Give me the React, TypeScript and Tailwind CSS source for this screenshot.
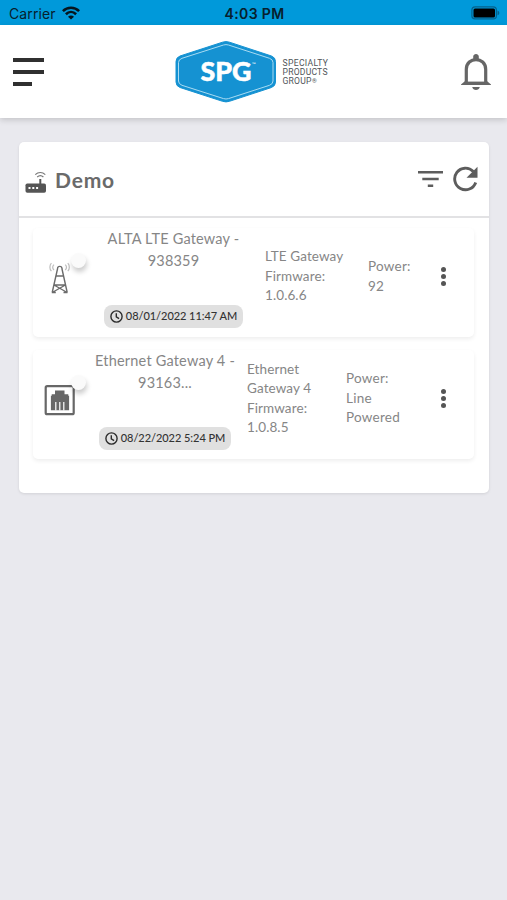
import * as React from 'react'

type Gateway = {
  name: string[]
  date: string
  details: string[]
  power: string[]
  icon: React.ReactNode
  columns: string
}

const TowerIcon = () => (
  <svg className="mt-[2px]" width="22" height="34" viewBox="0 0 22 34" fill="none" stroke="#6b6b6b" strokeWidth="1.4">
    <path d="M8.600 7.500 3.200 31.500M12.900 7.500l5.300 24M8.600 7.500c0-2.900 4.300-2.900 4.300 0M6.800 15h7.800M5 24l13.200 7.500M16.400 24 3.200 31.500M5 24h11.400M2.800 31.500h4M14.500 31.500h4" />
    <g stroke="#bdbdbd" strokeWidth="1.200">
      <path d="M2.400 2.200c-2 2-2 6 0 8M5 3.600c-1.500 1.500-1.500 3.800 0 5.400M18.800 2.200c2 2 2 6 0 8M16.200 3.600c1.500 1.500 1.500 3.800 0 5.400" />
    </g>
  </svg>
)

const EthernetIcon = () => (
  <svg className="mt-[4px]" width="31" height="31" viewBox="0 0 31 31" fill="none">
    <rect x="1.700" y="1.200" width="28" height="28" rx="1.500" stroke="#676767" strokeWidth="2.200" />
    <path d="M11 5.500h9.500v3.700h3.800v1.600h.8v14.500H6.900V10.800h.8V9.200H11z" fill="#676767" />
    <path d="M11.800 17v8.500M15.800 17v8.500M19.800 17v8.500" stroke="#fff" strokeWidth="1.200" />
  </svg>
)

const ClockIcon = () => (
  <svg width="13" height="13" viewBox="0 0 13 13" fill="none" stroke="#2b2b2b" strokeWidth="1.4">
    <circle cx="6.5" cy="6.5" r="5.6" />
    <path d="M6.3 3.2v3.6l2.8 1.8" />
  </svg>
)

const gateways: Gateway[] = [
  {
    name: ['ALTA LTE Gateway -', '938359'],
    date: '08/01/2022 11:47 AM',
    details: ['LTE Gateway', 'Firmware:', '1.0.6.6'],
    power: ['Power:', '92'],
    icon: <TowerIcon />,
    columns: 'grid-cols-[71px_139px_22px_103px_66px_1fr]',
  },
  {
    name: ['Ethernet Gateway 4 -', '93163...'],
    date: '08/22/2022 5:24 PM',
    details: ['Ethernet', 'Gateway 4', 'Firmware:', '1.0.8.5'],
    power: ['Power:', 'Line', 'Powered'],
    icon: <EthernetIcon />,
    columns: 'grid-cols-[62px_140px_12px_99px_88px_1fr]',
  },
]

const StatusBar = () => (
  <div className="grid h-[25px] grid-cols-3 items-center bg-[#0099da] pl-[9px] pr-[7px] text-[#07202d]">
    <div className="flex items-center gap-[6px] pt-[3px] font-['Inter'] text-[14px] leading-[18px]">
      <span className="tracking-[0.1px]">Carrier</span>
      <svg className="-mt-[3px]" width="18" height="14" viewBox="0 0 18 14" fill="none" stroke="#06151d" strokeWidth="2.6">
        <path d="M.9 5.1c4.600-4.500 11.600-4.500 16.200 0M3.900 8.200c3-2.900 7.200-2.900 10.200 0" />
        <path d="M9 13.600 6 10.700c1.800-1.600 4.200-1.600 6 0z" fill="#06151d" stroke="none" />
      </svg>
    </div>
    <span className="pt-[3px] text-center font-['Inter'] text-[14px] leading-[18px] font-semibold tracking-[0.35px] whitespace-nowrap">
      4:03 PM
    </span>
    <svg className="mt-px justify-self-end" width="29" height="14" viewBox="0 0 29 14">
      <rect x=".9" y=".9" width="24.500" height="12" rx="3.200" fill="none" stroke="#04628d" strokeWidth="1.200" />
      <rect x="2.500" y="2.500" width="21.500" height="9" rx="1.500" fill="#000" />
      <path d="M26.500 4.500c2.400.8 2.400 4 0 4.800z" fill="#04628d" />
    </svg>
  </div>
)

const Logo = () => (
  <svg className="-ml-px" width="156" height="64" viewBox="0 0 156 64">
    <path
      d="M47.5 2.200Q51 1 54.5 2.200L96.500 16Q100.500 17.500 100.500 21.500V42Q100.500 46 96.500 47.500L54.500 61.300Q51 62.500 47.500 61.300L5 47.500Q1 46 1 42V21.500Q1 17.500 5 16Z"
      fill="#1592d2"
      stroke="#1592d2"
    />
    <path
      d="M48.500 5Q51 4.200 53.500 5L94.500 18.300Q98 19.500 98 22.500V41Q98 44 94.500 45.300L53.500 58.600Q51 59.400 48.500 58.600L7 45.300Q3.500 44 3.500 41V22.500Q3.500 19.500 7 18.300Z"
      fill="none"
      stroke="#a9dbf2"
      strokeWidth="1"
    />
    <text
      x="25.500"
      y="41"
      textLength="51"
      lengthAdjust="spacingAndGlyphs"
      className="fill-white stroke-white stroke-[0.5px] font-['Lato'] text-[26px] font-black"
    >
      SPG
    </text>
    <text x="77" y="26" className="fill-white font-['Lato'] text-[5px]">
      ™
    </text>
    <g className="fill-[#4f5458] font-['Roboto'] text-[8.6px]">
      <text x="107.500" y="26" textLength="45.500">SPECIALTY</text>
      <text x="107.500" y="35" textLength="45">PRODUCTS</text>
      <text x="107.500" y="44" textLength="29">GROUP</text>
      <text x="137" y="43" className="text-[6px]">®</text>
    </g>
  </svg>
)

const Header = () => (
  <header className="relative grid h-[93px] grid-cols-[1fr_156px_1fr] items-center bg-white px-[13px] shadow-[0_2px_6px_rgba(0,0,0,0.16)]">
    <button type="button" className="flex flex-col gap-2">
      <span className="h-1 w-[31px] bg-[#303030]" />
      <span className="h-1 w-[31px] bg-[#303030]" />
      <span className="h-1 w-[19px] bg-[#303030]" />
    </button>
    <Logo />
    <svg className="justify-self-end" width="36" height="38" viewBox="0 0 36 38">
      <path d="M8.300 29V16.500c0-13.300 19.400-13.300 19.400 0V29" fill="none" stroke="#666" strokeWidth="3.200" />
      <path d="M3 31.500l5-4.300h20l5 4.300v.5H3zM15.200 6V3.600c0-3.600 5.600-3.600 5.600 0V6zM14.200 34h7.600c-.8 4-6.800 4-7.600 0z" fill="#666" />
      <path d="M9.900 27h16.200v1.600H9.900z" fill="#fff" />
    </svg>
  </header>
)

const CardHeader = () => (
  <div className="flex h-[76px] items-center border-b-2 border-[#e2e2e4] pl-[6px] pr-[11.5px]">
    <svg className="mt-[7px]" width="22" height="23" viewBox="0 0 22 23">
      <rect x=".5" y="12.500" width="20.500" height="9.200" rx="1.800" fill="#555" />
      <path d="M14.300 8h2v6h-2z" fill="#555" />
      <path d="M3.500 16h2v2h-2zM7.300 16h2v2h-2zM11.100 16h2v2h-2z" fill="#fff" />
      <path d="M10.300 3.600c2.900-2.800 7.100-2.800 10 0M12.200 6c1.900-1.700 4.300-1.700 6.200 0" fill="none" stroke="#777" strokeWidth="1.200" />
    </svg>
    <h1 className="mt-[2px] ml-[8px] font-['Lato'] text-[21px] leading-7 font-bold tracking-[0.8px] text-[#6a6a6a]">Demo</h1>
    <div className="ml-auto flex items-center gap-[9px]">
      <svg width="25" height="18" viewBox="0 0 25 18" fill="#5d5d5d">
        <path d="M0 1h25v2.600H0zM4.300 7.700h16.400v2.600H4.300zM9.800 14.400h5.400V17H9.800z" />
      </svg>
      <svg width="26" height="26" viewBox="0 0 26 26">
        <path d="M21.300 5.500A10.800 10.800 0 1 0 23.700 16.500" fill="none" stroke="#5d5d5d" strokeWidth="2.900" />
        <path d="M25.500.8v11H14.500z" fill="#5d5d5d" />
      </svg>
    </div>
  </div>
)

const GatewayRow: React.FC<{ gateway: Gateway }> = ({ gateway }) => (
  <div
    className={`grid h-[109px] items-center rounded-[5px] bg-white pb-[12px] font-['Lato'] text-[#868686] shadow-[0_2px_4px_rgba(0,0,0,0.07)] ${gateway.columns}`}
  >
    <div className="relative flex h-[40px] w-[53px] items-center justify-center">
      {gateway.icon}
      {/* Status dot */}
      <span className="absolute -top-[4px] left-[38px] size-[15px] rounded-full bg-[#fafafa] shadow-[1px_4px_5px_rgba(0,0,0,0.2)]" />
    </div>
    <div className="flex h-full flex-col items-center justify-between">
      <div className="text-center text-[14.5px] leading-[21.5px] tracking-[0.2px] whitespace-nowrap">
        {gateway.name.map((line) => (
          <p key={line}>{line}</p>
        ))}
      </div>
      <div className="-mb-[3px] flex h-[23px] items-center gap-[3px] rounded-[8px] bg-[#e0e0e0] px-[6px] text-[11px] font-medium text-[#333] whitespace-nowrap">
        <ClockIcon />
        <span className="-mt-px tracking-[-0.05px]">{gateway.date}</span>
      </div>
    </div>
    <div className="col-start-4 text-[13.5px] leading-[19.500px] tracking-[0.1px] whitespace-nowrap">
      {gateway.details.map((line) => (
        <p key={line}>{line}</p>
      ))}
    </div>
    <div className="text-[13.5px] leading-[19.500px] tracking-[0.25px]">
      {gateway.power.map((line) => (
        <p key={line}>{line}</p>
      ))}
    </div>
    <button type="button" className="flex flex-col gap-[2px] pl-[7px]">
      <span className="size-[5px] rounded-full bg-[#555]" />
      <span className="size-[5px] rounded-full bg-[#555]" />
      <span className="size-[5px] rounded-full bg-[#555]" />
    </button>
  </div>
)

export default function App() {
  return (
    <div className="h-[900px] w-[507px] overflow-hidden bg-[#e9e9ee]">
      <StatusBar />
      <Header />
      <main className="mt-[24px] mr-[18px] ml-[19px] h-[351px] rounded-[5px] bg-white shadow-[0_1px_3px_rgba(0,0,0,0.1)]">
        <CardHeader />
        <div className="flex flex-col gap-[13px] pt-[10px] pr-[15px] pl-[14px]">
          {gateways.map((gateway) => (
            <GatewayRow key={gateway.date} gateway={gateway} />
          ))}
        </div>
      </main>
    </div>
  )
}
